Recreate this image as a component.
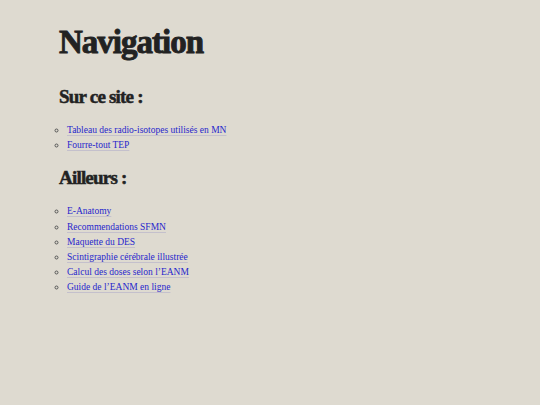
const sections = [
  {
    title: 'Sur ce site :',
    links: ['Tableau des radio-isotopes utilisés en MN', 'Fourre-tout TEP'],
  },
  {
    title: 'Ailleurs :',
    links: [
      'E-Anatomy',
      'Recommendations SFMN',
      'Maquette du DES',
      'Scintigraphie cérébrale illustrée',
      'Calcul des doses selon l’EANM',
      'Guide de l’EANM en ligne',
    ],
  },
];

export default function App() {
  return (
    <div className="min-h-[405px] bg-[#dedad0] px-[59px] pt-[22px] font-['Liberation_Serif',serif] text-[#222]">
      <h1 className="text-[33px] font-bold leading-[40px] tracking-[-1px] [-webkit-text-stroke:0.9px_#222]">
        Navigation
      </h1>
      {sections.map((s, i) => (
        <section key={s.title} className={i === 0 ? 'mt-[23px]' : 'mt-[13px]'}>
          <h2 className="text-[19px] font-bold leading-[24px] tracking-[-0.8px] [-webkit-text-stroke:0.5px_#222]">
            {s.title}
          </h2>
          <ul className="mt-[14px] list-[circle] pl-[8px] text-[9.5px] leading-[15.2px] marker:text-[#555]">
            {s.links.map((l) => (
              <li key={l}>
                <a href="#" className="text-[#2626cc] underline decoration-[#c4c0cc] underline-offset-2">
                  {l}
                </a>
              </li>
            ))}
          </ul>
        </section>
      ))}
    </div>
  );
}
